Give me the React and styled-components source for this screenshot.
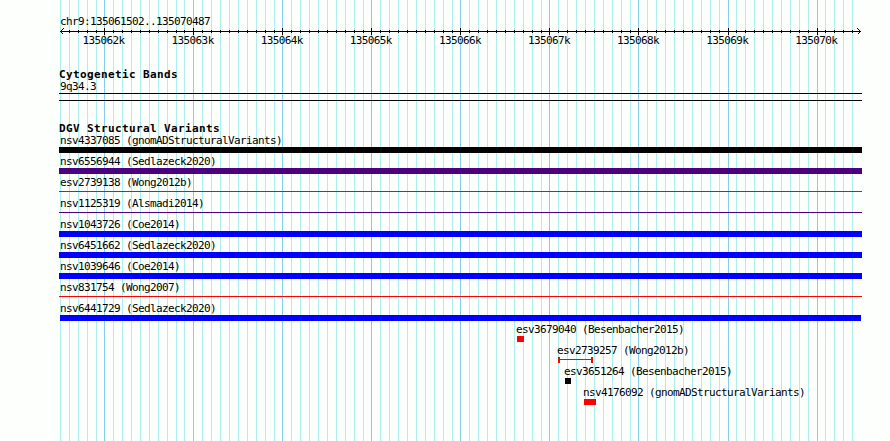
import React from "react";
import styled, { createGlobalStyle } from "styled-components";

const Global = createGlobalStyle`
  body { margin: 0; background: #fdfffc; }
`;

const Browser = styled.main`
  position: relative;
  box-sizing: border-box;
  width: 890px;
  height: 441px;
  padding: 15px 28px 0 59px;
  overflow: hidden;
  background: #fdfffc;
  color: #000;
  font: 11px/12px "DejaVu Sans Mono", monospace;
  letter-spacing: -0.622px;
  white-space: nowrap;
`;

const Drawing = styled.svg`
  display: block;
  shape-rendering: crispEdges;
`;

const Grid = styled(Drawing)`
  position: absolute;
  inset: 0;
`;

const Content = styled.div`
  position: relative;
  display: flex;
  flex-direction: column;
`;

const Region = styled.div`
  height: 12px;
  padding-left: 1px;
  line-height: 14px;
`;

const Ruler = styled.div`
  height: 42px;
`;

const TickLabels = styled.div`
  display: grid;
  grid-template-columns: repeat(9, 89.1px);
  padding-left: 23.5px;
  margin-top: -1px;
`;

const Heading = styled.h2`
  height: 12px;
  margin: 0;
  font: bold 11px/12px "DejaVu Sans Mono", monospace;
  letter-spacing: 0.378px;
`;

const Band = styled.div`
  box-sizing: border-box;
  width: 803px;
  height: 8px;
  margin-bottom: 22px;
  border: solid #000;
  border-width: 1px 0;
`;

const Track = styled.div`
  display: flex;
  flex-direction: column;
  height: 21px;
  padding-left: ${(p) => p.$start}px;
`;

const Name = styled.span`
  height: 12px;
  margin-left: ${(p) => p.$indent}px;
`;

const Bar = styled.span`
  width: ${(p) => p.$width}px;
  height: ${(p) => (p.$thin ? 1 : 6)}px;
  margin-top: ${(p) => (p.$thin ? 2 : 0)}px;
  background: ${(p) => p.$color};
`;

const Interval = styled.span`
  box-sizing: border-box;
  width: ${(p) => p.$width}px;
  height: 6px;
  padding-top: 2px;
  border: solid ${(p) => p.$color};
  border-width: 0 2px;

  &::before {
    content: "";
    display: block;
    height: 1px;
    background: ${(p) => p.$color};
  }
`;

const BLUE = "#0000ff";
const RED = "#ff0000";
const INDIGO = "#4b0082";

// Grid lines are 9px apart, except after these indices, where the gap is 8px.
const shortGaps = [4, 13, 24, 34, 44, 54, 64, 75, 85];

const ticks = Array.from({ length: 90 }, (_, i) => ({
  x: 60 + 9 * i - shortGaps.filter((g) => g < i).length,
  major: i % 10 === 5,
}));

const variants = [
  { name: "nsv4337085 (gnomADStructuralVariants)", color: "#000" },
  { name: "nsv6556944 (Sedlazeck2020)", color: INDIGO },
  { name: "esv2739138 (Wong2012b)", color: RED, thin: true },
  { name: "nsv1125319 (Alsmadi2014)", color: INDIGO, thin: true },
  { name: "nsv1043726 (Coe2014)", color: BLUE },
  { name: "nsv6451662 (Sedlazeck2020)", color: BLUE },
  { name: "nsv1039646 (Coe2014)", color: BLUE },
  { name: "nsv831754 (Wong2007)", color: RED, thin: true },
  { name: "nsv6441729 (Sedlazeck2020)", color: BLUE, start: 1, width: 801, indent: 0 },
  { name: "esv3679040 (Besenbacher2015)", color: RED, start: 458, width: 7, indent: -1 },
  { name: "esv2739257 (Wong2012b)", color: RED, start: 499, width: 35, indent: -1, interval: true },
  { name: "esv3651264 (Besenbacher2015)", color: "#000", start: 506, width: 6, indent: -1 },
  { name: "nsv4176092 (gnomADStructuralVariants)", color: RED, start: 525, width: 12, indent: -1 },
];

export default function App() {
  return (
    <Browser>
      <Global />
      <Grid width="890" height="441">
        {ticks.map((t) => (
          <rect key={t.x} x={t.x} y="0" width="1" height="441" fill={t.major ? "#87ceeb" : "#afeeee"} />
        ))}
      </Grid>
      <Content>
        <Region>chr9:135061502..135070487</Region>
        <Ruler>
          <Drawing width="803" height="9">
            <rect x="1" y="4" width="801" height="1" />
            {ticks.slice(1).map((t) => (
              <rect key={t.x} x={t.x - 59} y={t.major ? 1 : 3} width="1" height={t.major ? 7 : 3} />
            ))}
            <path d="M4.5 1.5L1.5 4.5L4.5 7.5M798.5 1.5L801.5 4.5L798.5 7.5" fill="none" stroke="#000" />
          </Drawing>
          <TickLabels>
            {[62, 63, 64, 65, 66, 67, 68, 69, 70].map((n) => (
              <span key={n}>1350{n}k</span>
            ))}
          </TickLabels>
        </Ruler>
        <Heading>Cytogenetic Bands</Heading>
        <Name $indent={1}>9q34.3</Name>
        <Band />
        <Heading>DGV Structural Variants</Heading>
        {variants.map((v) => (
          <Track key={v.name} $start={v.start ?? 0}>
            <Name $indent={v.indent ?? 1}>{v.name}</Name>
            {v.interval ? (
              <Interval $width={v.width} $color={v.color} />
            ) : (
              <Bar $width={v.width ?? 803} $thin={v.thin} $color={v.color} />
            )}
          </Track>
        ))}
      </Content>
    </Browser>
  );
}
